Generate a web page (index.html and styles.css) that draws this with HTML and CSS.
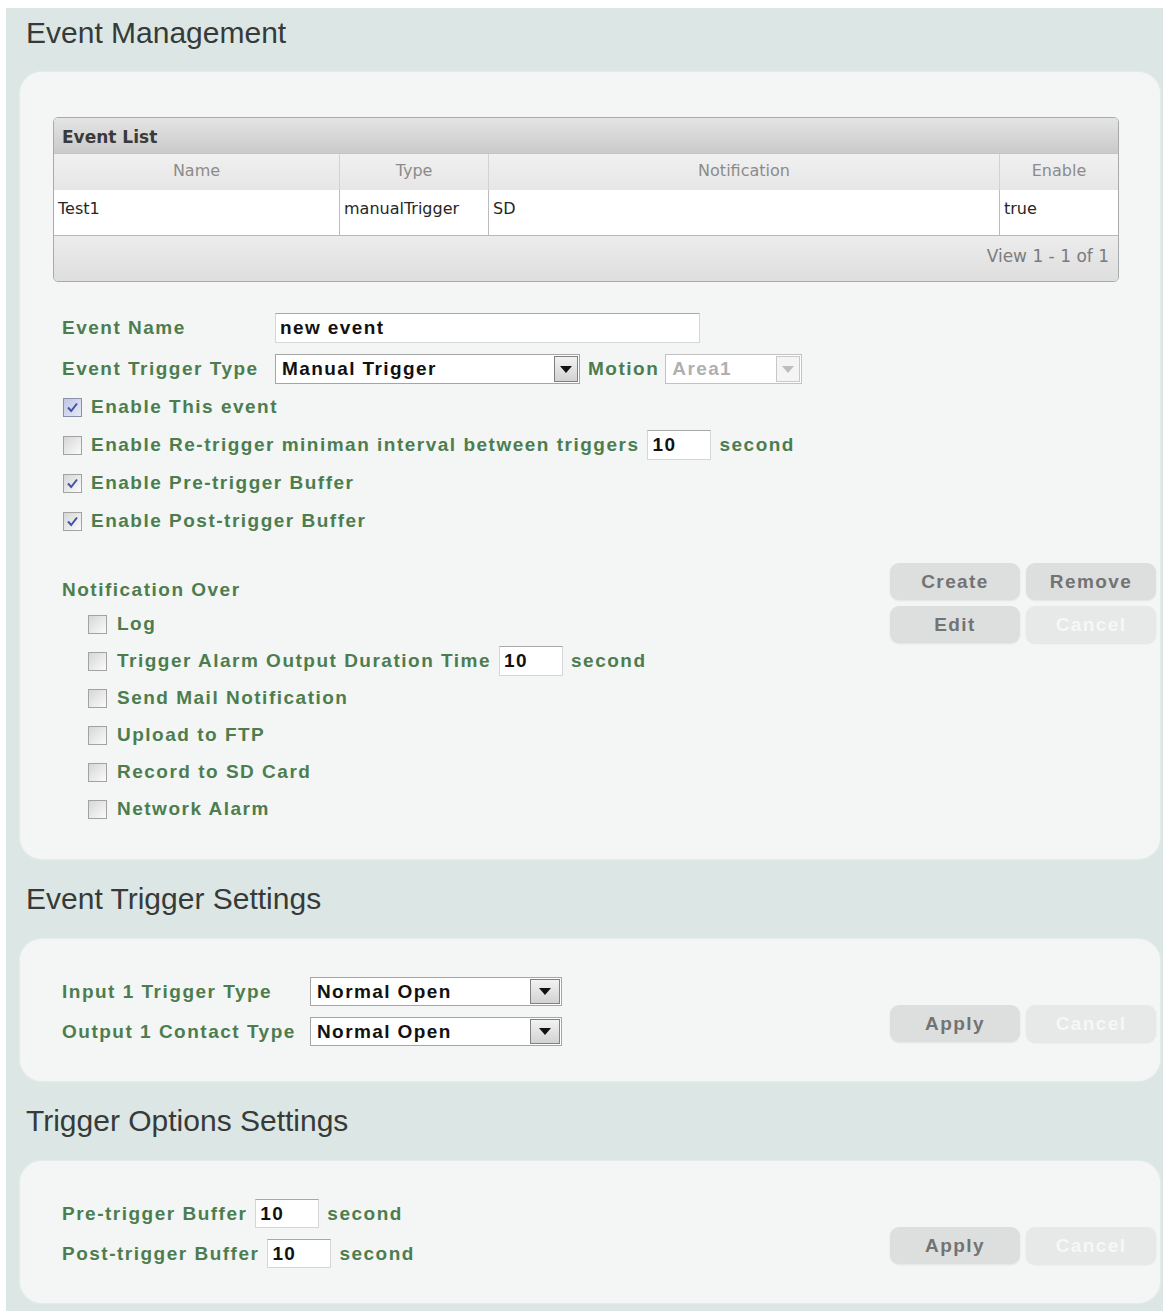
FILE: index.html
```html
<html>
    <head>
        <meta charset="utf-8">
        <link rel="stylesheet" href="styles.css">
    </head>
    <body>
        <div class="page">
            <h2 class="section-title">Event Management</h2>
            <div class="panel panel-events">
                <div class="grid">
                    <div class="grid-caption">Event List</div>
                    <table class="grid-table">
                        <thead>
                            <tr>
                                <th class="col-name">Name</th>
                                <th class="col-type">Type</th>
                                <th class="col-notify">Notification</th>
                                <th class="col-enable">Enable</th>
                            </tr>
                        </thead>
                        <tbody>
                            <tr>
                                <td>Test1</td>
                                <td>manualTrigger</td>
                                <td>SD</td>
                                <td>true</td>
                            </tr>
                        </tbody>
                    </table>
                    <div class="grid-pager">View 1 - 1 of 1</div>
                </div>

                <div class="form">
                    <div class="row first">
                        <span class="label name-col">Event Name</span>
                        <input class="field field-name" type="text" value="new event">
                    </div>
                    <div class="row">
                        <span class="label name-col">Event Trigger Type</span>
                        <div class="select select-trigger"><span class="select-text">Manual Trigger</span><span class="arrow"></span></div>
                        <span class="label">Motion</span>
                        <div class="select select-area disabled"><span class="select-text">Area1</span><span class="arrow"></span></div>
                    </div>
                    <label class="row check">
                        <span class="box checked focus"><svg viewBox="0 0 17 17"><path d="M4 8.5 L7.2 12 L13 4.5"/></svg></span>
                        <span class="label">Enable This event</span>
                    </label>
                    <label class="row check">
                        <span class="box"></span>
                        <span class="label">Enable Re-trigger miniman interval between triggers</span>
                        <input class="field field-num" type="text" value="10">
                        <span class="label">second</span>
                    </label>
                    <label class="row check">
                        <span class="box checked"><svg viewBox="0 0 17 17"><path d="M4 8.5 L7.2 12 L13 4.5"/></svg></span>
                        <span class="label">Enable Pre-trigger Buffer</span>
                    </label>
                    <label class="row check">
                        <span class="box checked"><svg viewBox="0 0 17 17"><path d="M4 8.5 L7.2 12 L13 4.5"/></svg></span>
                        <span class="label">Enable Post-trigger Buffer</span>
                    </label>
                </div>

                <div class="notify-block">
                    <div class="notify-list">
                        <div class="row"><span class="label">Notification Over</span></div>
                        <label class="row check sub"><span class="box"></span><span class="label">Log</span></label>
                        <label class="row check sub">
                            <span class="box"></span>
                            <span class="label">Trigger Alarm Output Duration Time</span>
                            <input class="field field-num" type="text" value="10">
                            <span class="label">second</span>
                        </label>
                        <label class="row check sub"><span class="box"></span><span class="label">Send Mail Notification</span></label>
                        <label class="row check sub"><span class="box"></span><span class="label">Upload to FTP</span></label>
                        <label class="row check sub"><span class="box"></span><span class="label">Record to SD Card</span></label>
                        <label class="row check sub"><span class="box"></span><span class="label">Network Alarm</span></label>
                    </div>
                    <div class="buttons">
                        <div class="btn">Create</div>
                        <div class="btn">Remove</div>
                        <div class="btn">Edit</div>
                        <div class="btn off">Cancel</div>
                    </div>
                </div>
            </div>

            <h2 class="section-title">Event Trigger Settings</h2>
            <div class="panel panel-settings">
                <div class="settings-rows">
                    <div class="row">
                        <span class="label io-col">Input 1 Trigger Type</span>
                        <div class="select select-io"><span class="select-text">Normal Open</span><span class="arrow"></span></div>
                    </div>
                    <div class="row">
                        <span class="label io-col">Output 1 Contact Type</span>
                        <div class="select select-io"><span class="select-text">Normal Open</span><span class="arrow"></span></div>
                    </div>
                </div>
                <div class="buttons">
                    <div class="btn">Apply</div>
                    <div class="btn off">Cancel</div>
                </div>
            </div>

            <h2 class="section-title">Trigger Options Settings</h2>
            <div class="panel panel-settings">
                <div class="settings-rows">
                    <div class="row">
                        <span class="label">Pre-trigger Buffer</span>
                        <input class="field field-num" type="text" value="10">
                        <span class="label">second</span>
                    </div>
                    <div class="row">
                        <span class="label">Post-trigger Buffer</span>
                        <input class="field field-num" type="text" value="10">
                        <span class="label">second</span>
                    </div>
                </div>
                <div class="buttons">
                    <div class="btn">Apply</div>
                    <div class="btn off">Cancel</div>
                </div>
            </div>
        </div>
    </body>
</html>
```

FILE: styles.css
```css
body {
    margin: 0;
    background: #fff;
    font-family: "Liberation Sans", Arial, sans-serif;
}

.page {
    margin: 8px 8px 0 6px;
    padding: 0 3px 8px 14px;
    background: #dce7e5;
}

.section-title {
    margin: 0;
    padding: 8px 0 22px 6px;
    font-size: 30px;
    line-height: 34px;
    font-weight: normal;
    color: #363a39;
}

.panel + .section-title {
    padding-top: 23px;
    padding-bottom: 23px;
}

.panel {
    background: #f3f6f5;
    border-radius: 22px;
    box-shadow: 0 0 2px rgba(255,255,255,0.8);
}

.panel-events {
    padding: 45px 4px 35px 33px;
}

/* event list grid */
.grid {
    width: 1066px;
    box-sizing: border-box;
    border: 1px solid #a9abaa;
    border-radius: 5px;
    overflow: hidden;
    font-family: "DejaVu Sans", sans-serif;
    font-size: 17px;
}

.grid-caption {
    height: 35px;
    line-height: 39px;
    padding-left: 8px;
    font-weight: bold;
    font-size: 17px;
    color: #3a3a3a;
    background: linear-gradient(#e4e4e4, #cacaca);
    border-bottom: 1px solid #c4c4c4;
}

.grid-table {
    width: 100%;
    border-collapse: collapse;
    table-layout: fixed;
}

.grid-table th {
    height: 36px;
    padding: 0;
    font-weight: normal;
    color: #8b8b8b;
    background: linear-gradient(#f0f0f0, #e6e6e6);
    border-right: 1px solid #d2d2d2;
    vertical-align: top;
    line-height: 33px;
}

.grid-table td {
    height: 45px;
    padding: 9px 4px 0 4px;
    box-sizing: border-box;
    color: #262626;
    background: #fff;
    border-right: 1px solid #bcbcbc;
    vertical-align: top;
    white-space: nowrap;
    overflow: hidden;
}

.grid-table th:last-child,
.grid-table td:last-child {
    border-right: none;
}

.col-name { width: 285px; }
.col-type { width: 148px; }
.col-notify { width: 510px; }

.grid-pager {
    height: 45px;
    line-height: 41px;
    padding-right: 9px;
    text-align: right;
    color: #7c7c7c;
    background: linear-gradient(#ececec, #dedede);
    border-top: 1px solid #b8b8b8;
}

/* form rows */
.form {
    margin: 31px 0 0 9px;
    display: flex;
    flex-direction: column;
    gap: 8px;
}

.form .first {
    margin-bottom: 3px;
}

.row {
    display: flex;
    align-items: center;
    gap: 8px;
    height: 30px;
}

.label {
    font-weight: bold;
    font-size: 19px;
    letter-spacing: 1.5px;
    color: #4d7d4f;
    white-space: nowrap;
}

.name-col {
    width: 205px;
}

.field {
    height: 30px;
    box-sizing: border-box;
    margin: 0;
    padding: 0 4px;
    border: 1px solid #d6d6d6;
    border-top-color: #a8a8a8;
    background: #fff;
    font-family: "Liberation Sans", Arial, sans-serif;
    font-weight: bold;
    font-size: 19px;
    letter-spacing: 1.4px;
    color: #111;
    outline: none;
}

.field-name {
    width: 425px;
}

.field-num {
    width: 64px;
}

.select {
    display: flex;
    align-items: stretch;
    height: 30px;
    box-sizing: border-box;
    border: 1px solid #a5a5a5;
    background: #fff;
}

.select-text {
    flex: 1;
    padding-left: 6px;
    line-height: 28px;
    font-weight: bold;
    font-size: 19px;
    letter-spacing: 1.4px;
    color: #111;
}

.arrow {
    width: 22px;
    margin: 1px;
    border: 1px solid #808080;
    background: linear-gradient(#f2f2f2, #d2d2d2);
    display: flex;
    align-items: center;
    justify-content: center;
}

.arrow::after {
    content: "";
    border-left: 6px solid transparent;
    border-right: 6px solid transparent;
    border-top: 7px solid #111;
}

.select-trigger {
    width: 305px;
}

.select-area {
    width: 137px;
    margin-left: -2px;
}

.select.disabled {
    border-color: #c2c2c2;
}

.select.disabled .select-text {
    color: #b0b0b0;
}

.select.disabled .arrow {
    border-color: #c8c8c8;
    background: #f4f4f4;
}

.select.disabled .arrow::after {
    border-top-color: #bdbdbd;
}

/* checkboxes */
.check {
    gap: 0;
}

.check .field-num {
    margin-left: 8px;
}

.check .field-num + .label {
    margin-left: 8px;
}

.box {
    width: 19px;
    height: 19px;
    box-sizing: border-box;
    margin: 0 9px 0 1px;
    border: 1px solid #a2a2a2;
    background: linear-gradient(135deg, #d6d6d6, #fbfbfb);
}

.box svg {
    display: block;
    width: 17px;
    height: 17px;
}

.box path {
    fill: none;
    stroke: #4252a8;
    stroke-width: 2;
}

.box.focus {
    background: linear-gradient(135deg, #bfc6e4, #e6e9f6);
    border-color: #8a8fa8;
}

/* notification + buttons */
.notify-block {
    margin-top: 27px;
    display: flex;
    justify-content: space-between;
    align-items: flex-start;
}

.notify-list {
    margin: 12px 0 0 9px;
    display: flex;
    flex-direction: column;
    gap: 7px;
}

.notify-list .row:first-child {
    margin-bottom: -3px;
}

.check.sub .box {
    margin-left: 26px;
    margin-right: 10px;
}

.buttons {
    display: grid;
    grid-template-columns: 130px 130px;
    grid-auto-rows: 37px;
    gap: 6px;
}

.btn {
    display: flex;
    align-items: center;
    justify-content: center;
    border-radius: 9px;
    background: #dcdfde;
    box-shadow: 0 1px 2px rgba(0,0,0,0.08);
    font-weight: bold;
    font-size: 19px;
    letter-spacing: 1.4px;
    color: #737373;
}

.btn.off {
    background: #e6e9e8;
    color: #f6f7f7;
}

/* lower settings panels */
.panel-settings {
    display: flex;
    justify-content: space-between;
    align-items: flex-start;
    padding: 38px 4px 35px 42px;
}

.panel-settings .buttons {
    margin-top: 28px;
}

.settings-rows {
    display: flex;
    flex-direction: column;
    gap: 11px;
}

.settings-rows .row {
    height: 29px;
}

.settings-rows .field {
    height: 29px;
}

.io-col {
    width: 240px;
}

.select-io {
    width: 252px;
    height: 29px;
}

.select-io .arrow {
    width: 28px;
}
```
